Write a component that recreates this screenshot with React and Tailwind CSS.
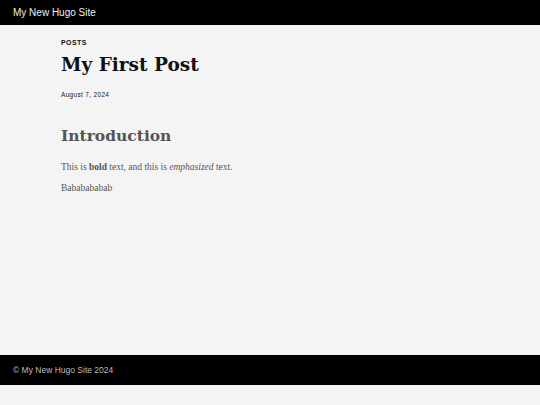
export default function App() {
  const serifH = { fontFamily: '"DejaVu Serif", Georgia, serif' };
  const serif = { fontFamily: '"Liberation Serif", Georgia, serif' };
  return (
    <div className="h-[405px] bg-[#f4f4f4] flex flex-col" style={{ fontFamily: '"Liberation Sans", Arial, sans-serif' }}>
      <header className="h-[25px] bg-black flex items-center px-[13px]">
        <span className="text-[10px] text-[#eeeeee] leading-none">My New Hugo Site</span>
      </header>
      <main className="h-[330px] pl-[61px]">
        <div className="pt-[14px] text-[7px] font-bold tracking-[0.06em] leading-[7px] text-[#111]">POSTS</div>
        <h1 className="mt-[9px] text-[18.5px] font-bold leading-[20px] text-[#111]" style={serifH}>My First Post</h1>
        <div className="mt-[16px] text-[6.5px] tracking-[0.05em] leading-[7px] text-[#222]">August 7, 2024</div>
        <h2 className="mt-[28px] text-[15.5px] font-bold leading-[20px] text-[#555]" style={serifH}>Introduction</h2>
        <p className="mt-[16px] text-[9.5px] leading-[10px] text-[#555]" style={serif}>
          This is <strong>bold</strong> text, and this is <em>emphasized</em> text.
        </p>
        <p className="mt-[11px] text-[9.5px] leading-[10px] text-[#555]" style={serif}>Bababababab</p>
      </main>
      <footer className="h-[30px] bg-black flex items-center px-[13px]">
        <span className="text-[8.5px] text-[#bbbbbb] leading-none">© My New Hugo Site 2024</span>
      </footer>
    </div>
  );
}
